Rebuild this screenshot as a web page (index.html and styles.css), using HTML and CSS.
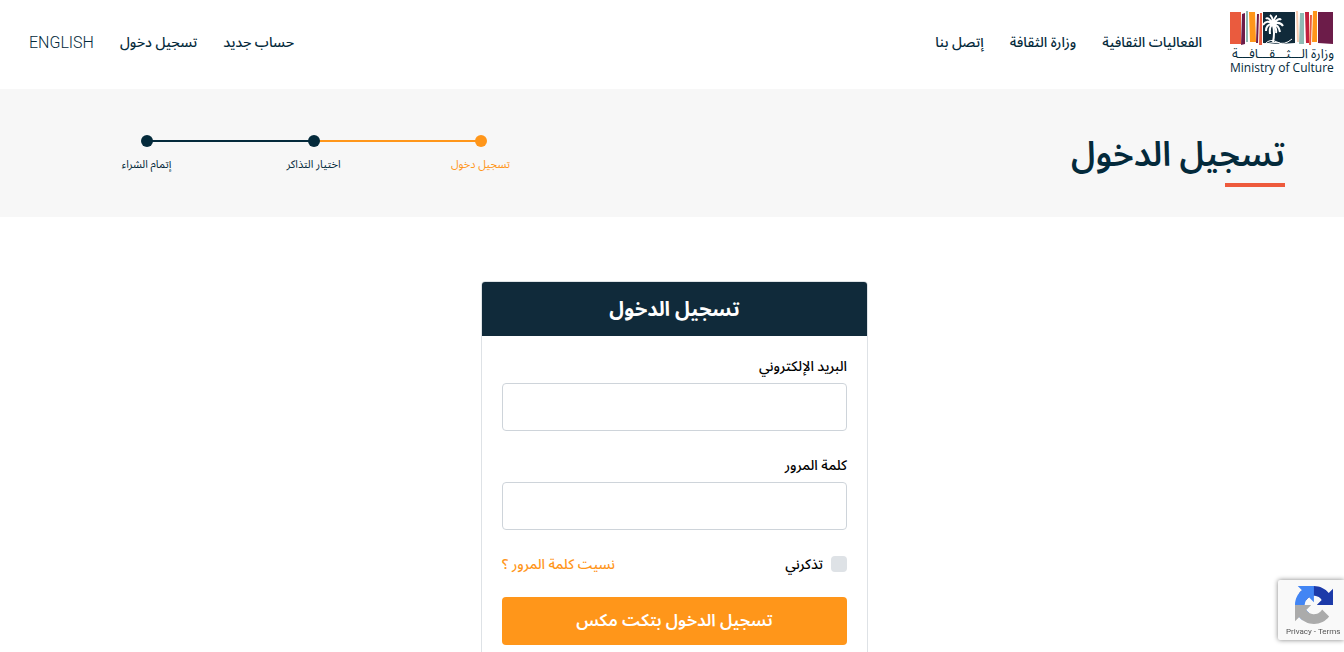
FILE: index.html
```html
<!DOCTYPE html>
<html lang="ar" dir="rtl">
<head>
    <meta charset="UTF-8">
    <meta name="viewport" content="width=device-width, initial-scale=1.0">
    <title>تسجيل الدخول</title>
    <link rel="stylesheet" href="styles.css">
</head>
<body>
    <header class="header">
        <a class="logo" href="#">
            <svg class="logo-mark" viewBox="0 0 104 36" aria-hidden="true">
                <path fill="#ea5b3e" d="M0 1H11V33H0z"/>
                <path fill="#6c1c49" d="M12 3L15 2V33L11 34z"/>
                <path fill="#8fbcb5" d="M16 0H18V31H16z"/>
                <path fill="#ff961a" d="M19 1H25L26 31H20z"/>
                <path fill="#6c1c49" d="M27 3H29L28 32H26z"/>
                <path fill="#ea5b3e" d="M30 2H32V34H29z"/>
                <path fill="#102a3a" d="M33 1H65V32L50 33L33 32z"/>
                <path fill="#f7cdb2" d="M66 0H68L69 31H67z"/>
                <path fill="#8fbcb5" d="M70 2H74V33H69z"/>
                <path fill="#c2203d" d="M75 1H79V32H76z"/>
                <path fill="#ea5b3e" d="M80 4H82L81 34H79z"/>
                <path fill="#ff961a" d="M83 0H87V31H82z"/>
                <path fill="#6c1c49" d="M88 1H103V33L88 32z"/>
                <g fill="none" stroke="#fff" stroke-width="2">
                    <path d="M43 14Q45 22 43 31M43 13Q37 8 33 14M43 13Q36 13 36 20M43 13Q39 15 40 23M43 13Q38 5 36 8M43 13Q43 6 40 4M43 13Q45 5 47 5M43 13Q49 6 51 9M43 13Q50 10 53 15M43 13Q49 14 50 21M43 13Q47 17 46 22"/>
                    <path stroke-width="1" d="M35 33Q40 27 47 31T62 28M36 33Q46 30 52 33"/>
                </g>
            </svg>
            <span class="logo-ar">وزارة الـــثـــقـــافـــة</span>
            <span class="logo-en" dir="ltr">Ministry of Culture</span>
        </a>
        <nav class="nav">
            <a href="#">الفعاليات الثقافية</a>
            <a href="#">وزارة الثقافة</a>
            <a href="#">إتصل بنا</a>
        </nav>
        <nav class="nav nav-user">
            <a href="#">حساب جديد</a>
            <a href="#">تسجيل دخول</a>
            <a class="lang" href="#" lang="en">ENGLISH</a>
        </nav>
    </header>

    <section class="banner">
        <h1 class="page-title">تسجيل الدخول</h1>
        <ol class="steps">
            <li class="step active">تسجيل دخول</li>
            <li class="step">اختيار التذاكر</li>
            <li class="step">إتمام الشراء</li>
        </ol>
    </section>

    <main class="main">
        <form class="card">
            <h2 class="card-title">تسجيل الدخول</h2>
            <div class="card-body">
                <div class="field">
                    <label for="email">البريد الإلكتروني</label>
                    <input type="email" id="email">
                </div>
                <div class="field">
                    <label for="password">كلمة المرور</label>
                    <input type="password" id="password">
                </div>
                <div class="options">
                    <label class="remember"><input type="checkbox"> تذكرني</label>
                    <a class="forgot" href="#">نسيت كلمة المرور ؟</a>
                </div>
                <button class="submit" type="submit">تسجيل الدخول بتكت مكس</button>
            </div>
        </form>
    </main>

    <aside class="recaptcha" dir="ltr">
        <svg class="recaptcha-mark" viewBox="0 0 64 64" aria-hidden="true">
            <path fill="#1c3aa9" d="M64 31.955l-.033-1.37V4.687l-7.16 7.16C50.9 4.674 41.98.093 31.99.093c-10.4 0-19.634 4.96-25.458 12.64l11.736 11.86a15.55 15.55 0 0 1 4.754-5.334c2.05-1.6 4.952-2.906 8.968-2.906.485 0 .86.057 1.135.163 4.976.393 9.288 3.14 11.828 7.124l-8.307 8.307L64 31.953"/>
            <path fill="#4285f4" d="M31.862.094l-1.37.033H4.594l7.16 7.16C4.58 13.147 0 22.067 0 32.057c0 10.4 4.96 19.634 12.64 25.458L24.5 45.78a15.55 15.55 0 0 1-5.334-4.754c-1.6-2.05-2.906-4.952-2.906-8.968 0-.485.057-.86.163-1.135.393-4.976 3.14-9.288 7.124-11.828l8.307 8.307L31.86.095"/>
            <path fill="#ababab" d="M.001 32.045l.033 1.37v25.898l7.16-7.16c5.86 7.173 14.78 11.754 24.77 11.754 10.4 0 19.634-4.96 25.458-12.64l-11.736-11.86a15.55 15.55 0 0 1-4.754 5.334c-2.05 1.6-4.952 2.906-8.968 2.906-.485 0-.86-.057-1.135-.163-4.976-.393-9.288-3.14-11.828-7.124l8.307-8.307c-10.522.04-22.4.066-27.295-.005"/>
        </svg>
        <div class="recaptcha-links"><a href="#">Privacy</a> - <a href="#">Terms</a></div>
    </aside>
</body>
</html>
```
FILE: styles.css
```css
* {
    box-sizing: border-box;
}
body {
    margin: 0;
    font-family: Roboto, "Noto Sans Arabic", "DejaVu Sans", sans-serif;
    font-size: 14px;
    color: #000;
    background-color: #fff;
}
a {
    color: inherit;
    text-decoration: none;
}
.header {
    display: flex;
    align-items: center;
    height: 89px;
    padding: 0 10px 4px 29px;
    color: #042a3b;
}
.logo {
    display: flex;
    flex-direction: column;
    width: 104px;
    margin-left: 28px;
    white-space: nowrap;
}
.logo-mark {
    width: 104px;
    height: 36px;
}
.logo-ar {
    font-size: 13px;
    line-height: 14px;
}
.logo-en {
    font-family: "Open Sans", sans-serif;
    font-size: 12px;
    font-weight: 500;
    line-height: 14px;
}
.nav {
    display: flex;
    align-items: center;
    gap: 26px;
    font-weight: 500;
}
.nav-user {
    margin-right: auto;
}
.lang {
    font-size: 16px;
    font-weight: 300;
}
.banner {
    display: flex;
    justify-content: space-between;
    height: 128px;
    padding: 44px 59px 0 63px;
    background-color: #f7f7f7;
    color: #042a3b;
}
.page-title {
    margin: 0;
    font-size: 34px;
    font-weight: 600;
    line-height: 42px;
}
.page-title::after {
    content: "";
    display: block;
    width: 60px;
    height: 4px;
    margin-top: 8px;
    background-color: #ee5a3c;
}
.steps {
    display: flex;
    width: 501px;
    margin: 0;
    padding: 0;
    list-style: none;
    font-size: 11px;
}
.step {
    position: relative;
    flex: 1;
    text-align: center;
    line-height: 20px;
}
.step::before {
    content: "";
    position: relative;
    z-index: 1;
    display: block;
    width: 12px;
    height: 12px;
    margin: 2px auto 8px;
    border-radius: 50%;
    background-color: currentColor;
}
/* line to the next step */
.step:not(:last-child)::after {
    content: "";
    position: absolute;
    top: 7px;
    right: 50%;
    width: 100%;
    height: 2px;
    background-color: currentColor;
}
.active {
    color: #ff961a;
}
.main {
    padding: 64px 0 64px 5px;
}
.card {
    width: 387px;
    margin: 0 auto;
    border: 1px solid #dee2e6;
    border-radius: 4px;
    overflow: hidden;
}
.card-title {
    margin: 0;
    background-color: #102a3a;
    color: #fff;
    font-size: 20px;
    font-weight: 700;
    line-height: 54px;
    text-align: center;
}
.card-body {
    padding: 20px;
    font-weight: 500;
}
.field {
    margin-bottom: 24px;
}
.field label {
    display: block;
    margin-bottom: 7px;
    line-height: 20px;
}
.field input {
    display: block;
    width: 100%;
    height: 48px;
    padding: 0 12px;
    border: 1px solid #ced4da;
    border-radius: 4px;
}
.options {
    display: flex;
    justify-content: space-between;
    align-items: center;
    height: 20px;
    margin-bottom: 23px;
}
.remember {
    display: flex;
    align-items: center;
    gap: 8px;
}
.remember input {
    appearance: none;
    width: 16px;
    height: 16px;
    margin: 0;
    border-radius: 4px;
    background-color: #dee2e6;
}
.forgot {
    color: #ff961a;
}
.submit {
    width: 100%;
    height: 48px;
    border: 0;
    border-radius: 4px;
    background-color: #ff961a;
    color: #fff;
    font-family: inherit;
    font-size: 17px;
    font-weight: 600;
}
.recaptcha {
    position: fixed;
    right: 0;
    bottom: 12px;
    width: 66px;
    height: 60px;
    padding: 6px 0 0 8px;
    border-radius: 2px 0 0 2px;
    background-color: #f9f9f9;
    box-shadow: 0 0 5px #808080;
}
.recaptcha-mark {
    display: block;
    width: 38px;
    height: 38px;
    margin-left: 9px;
}
.recaptcha-links {
    color: #555;
    font-size: 8px;
    line-height: 16px;
    white-space: nowrap;
}
```
